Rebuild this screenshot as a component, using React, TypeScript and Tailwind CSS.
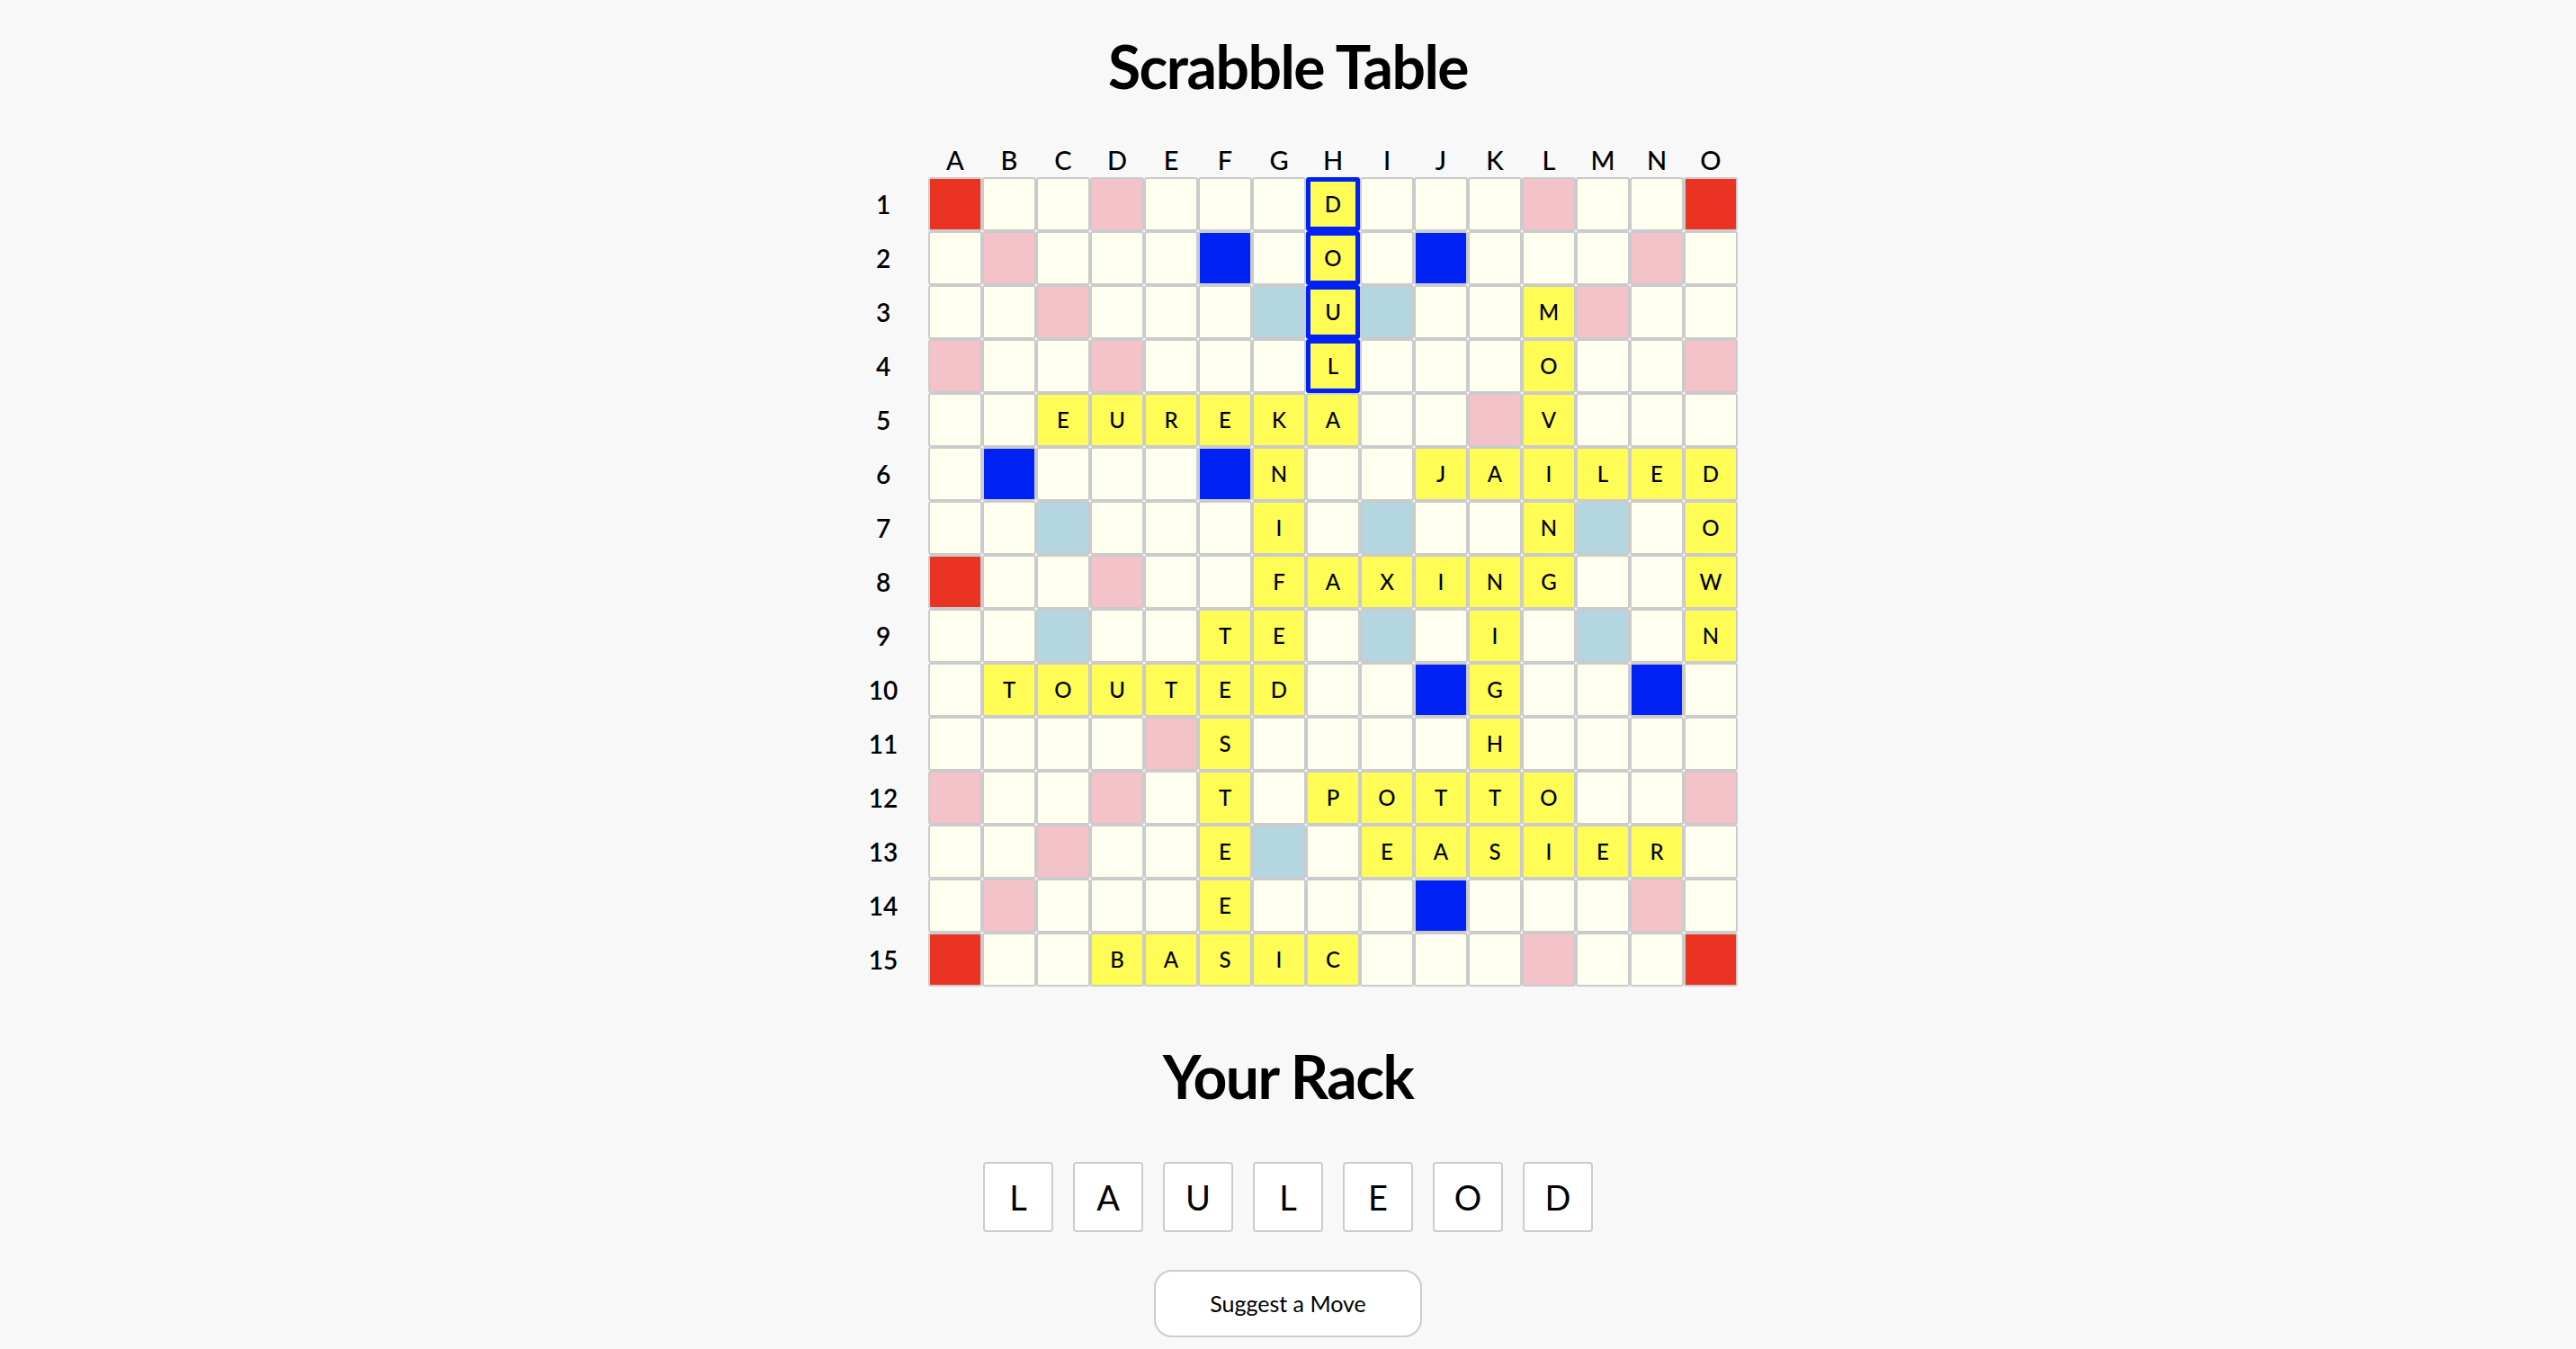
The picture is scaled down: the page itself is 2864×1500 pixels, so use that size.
import React from 'react';

const COLS = ['A', 'B', 'C', 'D', 'E', 'F', 'G', 'H', 'I', 'J', 'K', 'L', 'M', 'N', 'O'];

// . plain, 1 light blue, 2 pink, 3 red, 4 blue, letters = placed tiles
const BOARD = [
    '3..2...D...2..3',
    '.2...4.O.4...2.',
    '..2...1U1..M2..',
    '2..2...L...O..2',
    '..EUREKA..2V...',
    '.4...4N..JAILED',
    '..1...I.1..N1.O',
    '3..2..FAXING..W',
    '..1..TE.1.I.1.N',
    '.TOUTED..4G..4.',
    '....2S....H....',
    '2..2.T.POTTO..2',
    '..2..E1.EASIER.',
    '.2...E...4...2.',
    '3..BASIC...2..3',
];

// the word just suggested
const HIGHLIGHT = ['0-7', '1-7', '2-7', '3-7'];

const RACK = ['L', 'A', 'U', 'L', 'E', 'O', 'D'];

const squareBg: Record<string, string> = {
    '.': 'bg-[#fffff0]',
    '1': 'bg-[#b4d6e1]',
    '2': 'bg-[#f4c2c9]',
    '3': 'bg-[#ea3323]',
    '4': 'bg-[#0022f5]',
};

const Cell = ({ value, highlight }: { value: string; highlight: boolean }) => {
    const isTile = /[A-Z]/.test(value);
    const bg = isTile ? 'bg-[#fffd55]' : squareBg[value];
    return (
        <div
            className={`box-border w-[60px] h-[60px] flex items-center justify-center rounded-[3px] text-[24px] font-medium text-black ${bg} ${
                highlight ? 'border-[5px] border-[#0022f5]' : 'border-2 border-[#cbcbcb]'
            }`}
        >
            {isTile ? value : ''}
        </div>
    );
};

export default function App() {
    return (
        <div className="min-h-screen bg-[#f8f8f8] flex flex-col items-center text-black" style={{ fontFamily: 'Lato, "Open Sans", sans-serif' }}>
            <h1 className="mt-[41px] text-[66px] leading-[66px] font-bold tracking-[-1.5px]">Scrabble Table</h1>

            <div className="mt-[52px] grid grid-cols-[100px_repeat(15,60px)]">
                <div />
                {COLS.map((c) => (
                    <div key={c} className="h-[38px] text-center text-[29px] leading-[38px] font-medium">
                        {c}
                    </div>
                ))}
                {BOARD.map((row, r) => (
                    <React.Fragment key={r}>
                        <div className="h-[60px] flex items-center justify-center text-[28px] font-semibold">{r + 1}</div>
                        {row.split('').map((v, c) => (
                            <Cell key={c} value={v} highlight={HIGHLIGHT.includes(`${r}-${c}`)} />
                        ))}
                    </React.Fragment>
                ))}
            </div>

            <h2 className="mt-[67px] text-[66px] leading-[66px] font-bold tracking-[-1.5px]">Your Rack</h2>

            <div className="mt-[62px] flex gap-[22px]">
                {RACK.map((l, i) => (
                    <div
                        key={i}
                        className="w-[78px] h-[78px] flex items-center justify-center bg-white border-2 border-[#cccccc] rounded-[4px] text-[38px]"
                    >
                        {l}
                    </div>
                ))}
            </div>

            <button className="mt-[42px] w-[298px] h-[75px] bg-white border-2 border-[#cccccc] rounded-[20px] text-[25px] text-black">
                Suggest a Move
            </button>
        </div>
    );
}
